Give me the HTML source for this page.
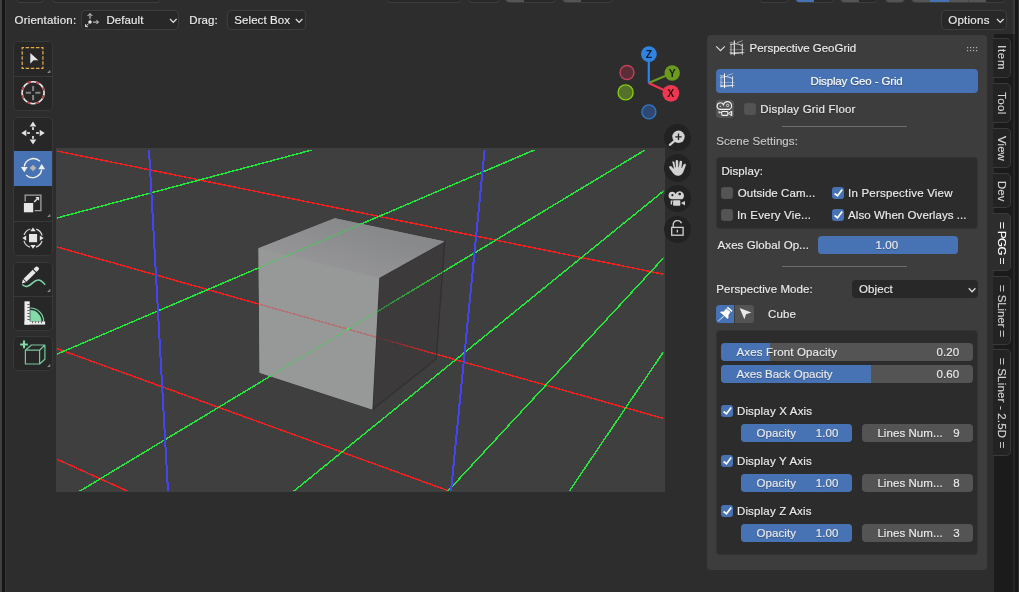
<!DOCTYPE html>
<html>
<head>
<meta charset="utf-8">
<title>Blender - Perspective GeoGrid</title>
<style>
*{box-sizing:border-box;margin:0;padding:0}
html,body{width:1019px;height:592px;overflow:hidden;background:#2d2d2d}
body{position:relative;font-family:"Liberation Sans",sans-serif;font-size:11.5px;line-height:13px;color:#ececec;letter-spacing:.07px;-webkit-text-stroke:.16px #ececec}
#root{position:absolute;left:0;top:0;width:1019px;height:592px;will-change:transform}
.a{position:absolute}
.t{position:absolute;white-space:pre;height:13px;text-shadow:0 1px 1px rgba(0,0,0,.3)}
svg{position:absolute;overflow:visible}
/* window edges */
#el0{left:0;top:0;width:2px;height:592px;background:#3f3f3f}
#el1{left:2px;top:0;width:3px;height:592px;background:#151515}
#el2{left:5px;top:0;width:1px;height:592px;background:#393939}
#er0{left:1013px;top:0;width:2px;height:34px;background:#2d2d2d}
#er1{left:1015.400px;top:0;width:2.300px;height:592px;background:#171717}
#er3{left:1013px;top:0;width:1.500px;height:34.300px;background:#393939}
#er4{left:1013px;top:34.300px;width:2.400px;height:558px;background:#262626}
#er2{left:1017.700px;top:0;width:1.300px;height:592px;background:#303030}
/* top strip buttons (cut off) */
.tb{position:absolute;top:-18px;height:21px;border:1px solid #3d3d3d;border-radius:4px;background:#282828;overflow:hidden}
.tb i{position:absolute;top:0;bottom:0;display:block}
.g{background:#545454}.b{background:#4772b3}
/* header dropdowns */
.dd{position:absolute;top:10px;height:20px;border:1px solid #3d3d3d;border-radius:4px;background:#282828}
/* toolbar */
.tg{position:absolute;left:13px;width:40px;border:1px solid #383838;border-radius:5px;background:#272727;overflow:hidden}
.tg .sep{position:absolute;left:0;width:38px;height:1px;background:#383838}
.tg .act{position:absolute;left:0;width:38px;background:#4772b3}
/* viewport */
#vp{left:56px;top:148px;width:609px;height:344px;background:#3f3f3f}
/* nav */
.nav{position:absolute;left:663.5px;width:27.5px;height:27.5px;border-radius:50%;background:#222}
/* sidebar */
#panel{left:707px;top:35px;width:280px;height:534.5px;background:#3d3d3d;border-radius:4px}
.box{position:absolute;left:716px;width:262px;background:#2c2c2c;border-radius:4px;border:1px solid #333}
.cb{position:absolute;width:12.3px;height:12.3px;border-radius:2.5px;background:#545454;border:1px solid #525252}
.cb.on{background:#4772b3;border-color:#4772b3}
.sl{position:absolute;height:18px;border-radius:4px;background:#545454;overflow:hidden}
.sl i{position:absolute;left:0;top:0;bottom:0;background:#4772b3;display:block}
.hr{position:absolute;left:782px;width:125px;height:1px;background:#6e6e6e}
/* tabs */
#tabcol{left:994px;top:34.300px;width:19px;height:558px;background:#1b1b1b}
.tab{position:absolute;left:993px;width:18px;border:1px solid #3a3a3a;border-left:none;border-radius:0 5px 5px 0;background:#232323}
.tab.on{background:#2d2d2d;left:992px;width:19px}
.tt{position:absolute;left:1002px;white-space:pre;transform-origin:0 0;transform:rotate(90deg);height:13px;color:#d4d4d4;-webkit-text-stroke:.15px #d4d4d4}
</style>
</head>
<body>
<div id="root">
<!-- window edges -->
<div class="a" id="el0"></div><div class="a" id="el1"></div><div class="a" id="el2"></div>
<div class="a" id="er1"></div><div class="a" id="er2"></div><div class="a" id="er3"></div><div class="a" id="er4"></div>

<!-- top strip -->
<div class="tb" style="left:16px;width:28px"></div>
<div class="tb" style="left:52px;width:109px"></div>
<div class="tb" style="left:386px;width:76px"></div>
<div class="tb" style="left:468px;width:32px"></div>
<div class="tb" style="left:505px;width:51px"><i class="g" style="left:0;width:18px"></i></div>
<div class="tb" style="left:562px;width:51px"><i class="g" style="left:0;width:18px"></i></div>
<div class="tb" style="left:759px;width:30px"></div>
<div class="tb" style="left:795px;width:39px"><i class="b" style="left:0;width:18px"></i></div>
<div class="tb" style="left:840px;width:38px"><i class="g" style="left:0;width:18px"></i></div>
<div class="tb" style="left:885px;width:20px"><i class="g" style="left:0;width:20px"></i></div>
<div class="tb" style="left:911px;width:95px"><i class="g" style="left:0;width:18px"></i><i class="b" style="left:18px;width:19px"></i><i class="g" style="left:37px;width:37px"></i><i style="left:55.5px;width:1px;background:#484848"></i></div>

<!-- header row -->
<div class="t" style="left:14.5px;top:13.5px;letter-spacing:.2px">Orientation:</div>
<div class="dd" style="left:81px;width:98px"></div>
<div class="t" style="left:106.5px;top:13.5px">Default</div>
<div class="t" style="left:189.3px;top:13.5px">Drag:</div>
<div class="dd" style="left:226.5px;width:79px"></div>
<div class="t" style="left:234.3px;top:13.5px">Select Box</div>
<div class="dd" style="left:940.5px;width:66px"></div>
<div class="t" style="left:948.2px;top:13.5px;letter-spacing:.27px">Options</div>

<!-- toolbar -->
<div class="tg" style="top:41px;height:69.5px"><div class="sep" style="top:33.5px"></div></div>
<div class="tg" style="top:116.5px;height:139px"><div class="act" style="top:33.5px;height:34.5px"></div><div class="sep" style="top:103px"></div></div>
<div class="tg" style="top:261.5px;height:69px"><div class="sep" style="top:33.5px"></div></div>
<div class="tg" style="top:336px;height:35px"></div>

<svg id="toolsvg" width="1019" height="592" viewBox="0 0 1019 592" style="left:0;top:0">
<!-- 1 select box -->
<rect x="22.200" y="47.700" width="20.700" height="20.600" fill="none" stroke="#e8ab44" stroke-width="1.250" stroke-dasharray="3.500 1.660" stroke-dashoffset="1.750"/>
<path d="M30.300 53v10.800l3.200-3.500h4.800z" fill="#e6e6e6"/>
<path d="M50.300 69.800v3.200h-3.200z" fill="#8a8a8a"/>
<!-- 2 cursor -->
<circle cx="33.100" cy="92.700" r="11" fill="none" stroke="#ececec" stroke-width="1.600"/>
<circle cx="33.100" cy="92.700" r="11" fill="none" stroke="#c23a44" stroke-width="1.600" stroke-dasharray="3.700 4.939" stroke-dashoffset="-2.500"/>
<path d="M25.800 92.700h5.200M35.300 92.700h5.200M33.100 85.900v5.100M33.100 95v5.300" stroke="#848484" stroke-width="2" fill="none"/>
<!-- 3 move -->
<g fill="#e2e2e2">
<path d="M33 121.400l3.300 5h-6.600z"/><rect x="32.100" y="127.200" width="1.800" height="2.800"/>
<path d="M33 144.600l3.300-5h-6.600z"/><rect x="32.100" y="136" width="1.800" height="2.800"/>
<path d="M21.300 133l5-3.300v6.600z"/><rect x="27.100" y="132.100" width="2.800" height="1.800"/>
<path d="M44.700 133l-5-3.300v6.600z"/><rect x="36.100" y="132.100" width="2.800" height="1.800"/>
</g>
<!-- 4 rotate (active) -->
<g fill="none" stroke="#f0f0f0" stroke-width="1.400">
<path d="M24.300 166.500a9.200 9.200 0 0 1 15.600-5.200"/>
<path d="M41.700 169.700a9.200 9.200 0 0 1-15.600 5.200"/>
</g>
<path d="M20.900 167h6.800l-3.400 5.200z" fill="#f0f0f0"/>
<path d="M45.100 169.200h-6.800l3.400-5.200z" fill="#f0f0f0"/>
<path d="M33 164.700l3.300 3.300-3.300 3.300-3.300-3.300z" fill="#b4b4b4"/>
<!-- 5 scale -->
<path d="M25.200 201.500v-6.300h15.700v15.500h-6.300" fill="none" stroke="#a2a2a2" stroke-width="1.300"/>
<rect x="23.900" y="203" width="9.300" height="9.300" fill="#e6e6e6"/>
<path d="M34.200 201.900l3.400-3.400" stroke="#e6e6e6" stroke-width="1.400" fill="none"/>
<path d="M39.100 197v3.800l-3.800-3.800z" fill="#e6e6e6"/>
<path d="M50.300 213.800v3.200h-3.200z" fill="#8a8a8a"/>
<!-- 6 transform -->
<rect x="29" y="234" width="8.100" height="8.200" fill="#e6e6e6"/>
<circle cx="33" cy="238.100" r="9.500" fill="none" stroke="#dcdcdc" stroke-width="1.200" stroke-dasharray="8.900 6.023" stroke-dashoffset="-3"/>
<g fill="#e6e6e6"><path d="M33 227.500l2.700 3.800h-5.400z"/><path d="M33 248.700l2.700-3.800h-5.400z"/><path d="M22.400 238.100l3.800-2.700v5.400z"/><path d="M43.600 238.100l-3.800-2.700v5.400z"/></g>
<!-- 7 annotate -->
<path d="M22.300 284.600c3.400 3.500 7 1.600 10.300-1.700 3.400-3.300 7.300-5.200 12.500 1.900" fill="none" stroke="#7fd6a6" stroke-width="1.500"/>
<path d="M21.80 283.40L25.91 282.32L22.98 279.31zM26.49 281.76L35.65 272.82L32.72 269.82L23.55 278.75zM36.44 272.05L38.73 269.82Q39.73 268.84 38.26 267.34Q36.80 265.84 35.79 266.81L33.50 269.05z" fill="#e8e8e8"/>
<path d="M50.300 288.800v3.200h-3.200z" fill="#8a8a8a"/>
<!-- 8 measure -->
<path d="M30.300 321.300v-11.200a11.200 11.200 0 0 1 11.200 11.200z" fill="#83dba9"/>
<path d="M30.300 308a13.300 13.300 0 0 1 13.300 13.300" fill="none" stroke="#83dba9" stroke-width="1.100"/>
<rect x="24.500" y="301.300" width="5.200" height="23.300" fill="#ededed"/>
<rect x="24.500" y="321.400" width="20.600" height="3.200" fill="#ededed"/>
<path d="M27.300 304.500h2.400M27.300 307.500h2.400M27.300 310.500h2.400M27.300 313.500h2.400M27.300 316.500h2.400M27.300 319.500h2.400M32.500 321.400v1.800M35.500 321.400v1.800M38.500 321.400v1.800M41.500 321.400v1.800" stroke="#555" stroke-width=".9" fill="none"/>
<!-- 9 add cube -->
<path d="M20.200 344.400h7.600M24 340.600v7.600" stroke="#83dba9" stroke-width="2" fill="none"/>
<path d="M25.400 350.200h14.200v13.800h-14.200zM25.400 350.200l6-5.200h13.500l-5.300 5.200M44.900 345v14.200l-5.300 4.800" fill="none" stroke="#79c89c" stroke-width="1.200" stroke-linejoin="round"/>
<path d="M50.300 363.800v3.200h-3.200z" fill="#8a8a8a"/>
</svg>

<!-- viewport -->
<div class="a" id="vp"></div>
<svg id="vpsvg" width="1019" height="592" viewBox="0 0 1019 592" style="left:0;top:0">
<defs>
<clipPath id="cv"><rect x="57" y="150" width="606.4" height="341"/></clipPath>
<clipPath id="cL"><polygon points="258.5,248.2 379.3,278 372.4,409.6 259.6,372.7"/></clipPath>
<clipPath id="cT"><polygon points="258.5,248.2 334.9,218.2 444.7,241.6 379.3,278"/></clipPath>
<clipPath id="cR"><polygon points="379.3,278 444.7,241.6 436.2,358.9 372.4,409.6"/></clipPath>
<linearGradient id="gG" gradientUnits="userSpaceOnUse" x1="376" y1="0" x2="441" y2="0"><stop offset="0" stop-color="#22e63a" stop-opacity=".4"/><stop offset="1" stop-color="#22e63a" stop-opacity=".78"/></linearGradient>
<linearGradient id="gT" gradientUnits="userSpaceOnUse" x1="350" y1="222" x2="335" y2="268"><stop offset="0" stop-color="#88898b"/><stop offset="1" stop-color="#949496"/></linearGradient>
<linearGradient id="gR" gradientUnits="userSpaceOnUse" x1="380" y1="0" x2="437" y2="0"><stop offset="0" stop-color="#ee2020" stop-opacity=".12"/><stop offset="1" stop-color="#ee2020" stop-opacity=".9"/></linearGradient>
<g id="lnR"><line x1="57" y1="151" x2="664" y2="274.3"/><line x1="57" y1="247" x2="664" y2="418.6"/><line x1="57" y1="348.6" x2="449" y2="491"/><line x1="57" y1="459.2" x2="128" y2="491.3"/></g>
<g id="lnG"><line x1="57" y1="218" x2="312" y2="150"/><line x1="57" y1="354.1" x2="535.4" y2="149.5"/><line x1="79" y1="491.6" x2="645" y2="150"/><line x1="293.2" y1="491.6" x2="664" y2="190.6"/><line x1="447.4" y1="491.6" x2="664" y2="257.4"/><line x1="569" y1="491.6" x2="663.4" y2="352"/></g>
<g id="lnB"><line x1="149" y1="150" x2="168" y2="491"/><line x1="484.6" y1="150" x2="451" y2="491"/></g>
</defs>
<g clip-path="url(#cv)" shape-rendering="crispEdges" stroke-width="1.5" fill="none">
<use href="#lnR" stroke="#ee2020"/>
<use href="#lnG" stroke="#22e63a"/>
<use href="#lnB" stroke="#4444f0" stroke-width="2"/>
</g>
<!-- cube -->
<polygon points="258.5,248.2 334.9,218.2 444.7,241.6 379.3,278 372.4,409.6 259.6,372.7" fill="#959697"/>
<polygon points="379.3,278 444.7,241.6 436.2,358.9 372.4,409.6" fill="#3d3a3c" stroke="#312f31" stroke-width="1.200"/>
<polygon points="258.5,248.2 334.9,218.2 444.7,241.6 379.3,278" fill="url(#gT)"/>
<polygon points="258.5,248.2 379.3,278 372.4,409.6 259.6,372.7" fill="#979898"/>
<g shape-rendering="crispEdges" stroke-width="1.5" fill="none">
<g clip-path="url(#cL)" opacity=".3"><use href="#lnR" stroke="#ee2020"/><use href="#lnG" stroke="#22e63a"/></g>
<g clip-path="url(#cT)" opacity=".36"><use href="#lnG" stroke="#22e63a"/></g>
<rect x="347.300" y="328.300" width="2" height="1.800" fill="#44ea50"/>
<g clip-path="url(#cR)"><use href="#lnR" stroke="url(#gR)"/><use href="#lnG" stroke="url(#gG)"/></g>
</g>
</svg>

<!-- gizmo -->
<svg id="gizmo" width="1019" height="592" viewBox="0 0 1019 592" style="left:0;top:0">
<circle cx="627" cy="72.5" r="7" fill="#5a2d37" stroke="#c2425b" stroke-width="1.4"/>
<circle cx="625.6" cy="92.4" r="7.5" fill="#566f2b" stroke="#86cc10" stroke-width="1.4"/>
<circle cx="648.9" cy="111.9" r="7" fill="#2e4870" stroke="#2f78cf" stroke-width="1.4"/>
<line x1="648.6" y1="83.1" x2="672.2" y2="73" stroke="#6b9a1f" stroke-width="2.2"/>
<circle cx="672.2" cy="73" r="7.7" fill="#6b9a1f"/>
<line x1="648.8" y1="83.1" x2="648.8" y2="54.1" stroke="#2f84e3" stroke-width="2.2"/>
<line x1="648.6" y1="83.1" x2="670.9" y2="93.3" stroke="#f03752" stroke-width="2.2"/>
<circle cx="670.9" cy="93.3" r="8.4" fill="#f03752"/>
<circle cx="648.9" cy="54.1" r="7.9" fill="#2f84e3"/>
<g font-family="Liberation Sans, sans-serif" font-weight="bold" font-size="10.5" text-anchor="middle" fill="#000" fill-opacity=".78">
<text x="648.9" y="57.9">Z</text><text x="672.2" y="76.8">Y</text><text x="670.9" y="97.1">X</text>
</g>
</svg>

<!-- nav buttons -->
<div class="nav" style="top:123.5px"></div>
<div class="nav" style="top:154.3px"></div>
<div class="nav" style="top:184.8px"></div>
<div class="nav" style="top:215.5px"></div>
<svg id="navsvg" width="1019" height="592" viewBox="0 0 1019 592" style="left:0;top:0">
<!-- zoom -->
<line x1="674" y1="141.4" x2="669.8" y2="144.8" stroke="#d2d2d2" stroke-width="2.2" stroke-linecap="round"/>
<circle cx="678.5" cy="136.8" r="6.2" fill="#d2d2d2"/>
<path d="M675.3 136.8h6.4M678.5 133.6v6.4" stroke="#222" stroke-width="1.3" fill="none"/>
<!-- hand -->
<path d="M672.6 161.2c.9-.3 1.6.2 1.7 1l.9 5.2.5-.1-.2-6.300c0-.9.6-1.500 1.400-1.500s1.400.6 1.400 1.500l.2 6.100.5.000.7-5.600c.1-.9.800-1.400 1.600-1.300.8.100 1.300.800 1.200 1.700l-.7 6.000.5.200 1.700-3.900c.4-.8 1.100-1.100 1.800-.8.700.300.900 1.100.6 1.900l-2.200 5.800c-.9 2.700-2.700 5.100-6.300 5.100-2.700 0-4.300-1.300-5.700-3.400l-3.300-4.600c-.5-.8-.4-1.600.2-2.100.6-.5 1.500-.4 2.100.3l2.200 2.300.3-.2-1.600-6.500c-.2-.9.200-1.600 1-1.900z" fill="#d2d2d2" transform="translate(677.1 168.2) scale(.93) translate(-677.1 -168.2)"/>
<!-- camera -->
<path d="M672.3 191.700a3.500 3.500 0 0 1 3.300 2.200 4.400 4.400 0 1 1 6.700 5.300h-10a3.500 3.500 0 0 1 0-7.500z" fill="#d2d2d2"/>
<circle cx="672.400" cy="195.200" r="1.100" fill="#222"/><circle cx="679.700" cy="194.000" r="1.300" fill="#222"/>
<rect x="673.1" y="200.300" width="7.200" height="5.400" rx=".8" fill="#d2d2d2"/>
<path d="M680.900 203.000 685 200.900v4.700z" fill="#d2d2d2"/>
<path d="M670.700 200.600h2v1.200h-.6v2.800h-1.400z" fill="#d2d2d2"/>
<!-- lock -->
<rect x="671.700" y="227.400" width="11.400" height="7.800" fill="none" stroke="#d2d2d2" stroke-width="1.300"/>
<path d="M673.200 227.400v-2.600a4.300 4.300 0 0 1 8.300-1.500" fill="none" stroke="#d2d2d2" stroke-width="1.300"/>
<rect x="676.700" y="229.800" width="1.300" height="2.700" fill="#d2d2d2"/>
</svg>

<!-- sidebar -->
<div class="a" id="tabcol"></div>
<div class="a" id="panel"></div>
<!-- panel header -->
<svg width="1019" height="592" viewBox="0 0 1019 592" style="left:0;top:0">
<defs>
<g id="geo" fill="none" stroke="#fff">
<path d="M4.9 .3v14.9" stroke-width="1" stroke-opacity=".95"/>
<path d="M12.9 3.3v11.200" stroke-width=".9" stroke-opacity=".85"/>
<path d="M1.100 3.800v10.600M2.200 3.800v10.600" stroke-width=".7" stroke-opacity=".5"/>
<path d="M0 2.600h4.300" stroke-width=".8" stroke-opacity=".55"/>
<path d="M7.600 2.600l5.600-2.100" stroke-width=".8" stroke-opacity=".6"/>
<path d="M.9 4.200l4-.3M5.400 3.400c2.600.3 5.200 1 7.500 2.100" stroke-width=".9" stroke-opacity=".8"/>
<path d="M.1 9.500h14.900" stroke-width=".8" stroke-opacity=".4"/>
<path d="M.1 12.400h14.900" stroke-width=".8" stroke-opacity=".6"/>
<path d="M.9 13.400c4 .2 8-.2 12-1" stroke-width=".9" stroke-opacity=".8"/>
</g>
</defs>
<path d="M716.200 46.300l4.300 4.400 4.300-4.400" fill="none" stroke="#dcdcdc" stroke-width="1.200"/>
<use href="#geo" x="729.400" y="40.200"/>
<g fill="#b4b4b4"><rect x="967" y="47" width="1.2" height="1.2"/><rect x="970" y="47" width="1.2" height="1.2"/><rect x="973" y="47" width="1.2" height="1.2"/><rect x="976" y="47" width="1.2" height="1.2"/><rect x="967" y="50" width="1.2" height="1.2"/><rect x="970" y="50" width="1.2" height="1.2"/><rect x="973" y="50" width="1.2" height="1.2"/><rect x="976" y="50" width="1.2" height="1.2"/></g>
</svg>
<div class="t" style="left:749.5px;top:41.700px;letter-spacing:0">Perspective GeoGrid</div>

<!-- display geo-grid button -->
<div class="a" style="left:716px;top:69px;width:262px;height:24px;border-radius:4px;background:#4772b3"></div>
<svg width="1019" height="592" viewBox="0 0 1019 592" style="left:0;top:0"><use href="#geo" x="719.600" y="73"/></svg>
<div class="t" style="left:810.5px;top:74.600px;color:#fff;-webkit-text-stroke-color:#fff;letter-spacing:-.14px">Display Geo - Grid</div>

<!-- camera + grid floor -->
<div class="a" style="left:716px;top:100px;width:18px;height:18px;border-radius:3.500px;background:#545454"></div>
<svg width="1019" height="592" viewBox="0 0 1019 592" style="left:0;top:0">
<g fill="none" stroke="#f0f0f0" stroke-width="1.100">
<path d="M720.300 109.400a3.300 3.300 0 1 1 3.100-4.600 4.200 4.200 0 1 1 6.300 4.600z"/>
<rect x="721.700" y="111.500" width="6.100" height="3.900" rx=".8"/>
<path d="M728.400 113.400l3-2v4z" stroke-width="1"/><path d="M731.700 110.900v5"/>
<path d="M719.100 111.200v2.200M719.100 112.300h2.600" stroke-width="1"/>
</g>
<circle cx="727.600" cy="105.400" r="1.200" fill="none" stroke="#f0f0f0" stroke-width=".8"/><circle cx="720.300" cy="106.300" r=".65" fill="#f0f0f0"/>
</svg>
<div class="cb" style="left:744px;top:103px"></div>
<div class="t" style="left:760.300px;top:102.600px;letter-spacing:.18px">Display Grid Floor</div>
<div class="hr" style="top:126px"></div>

<div class="t" style="left:716.300px;top:134.600px;color:#c8c8c8;-webkit-text-stroke-color:#c8c8c8">Scene Settings:</div>
<div class="box" style="top:157px;height:72px"></div>
<div class="t" style="left:721.500px;top:164.500px">Display:</div>
<div class="cb" style="left:721px;top:186.700px"></div>
<div class="t" style="left:737.700px;top:186.500px">Outside Cam...</div>
<div class="cb on" style="left:832px;top:186.700px"></div>
<div class="t" style="left:848.100px;top:186.500px;letter-spacing:.2px">In Perspective View</div>
<div class="cb" style="left:721px;top:208.700px"></div>
<div class="t" style="left:736.900px;top:208.600px;letter-spacing:.2px">In Every Vie...</div>
<div class="cb on" style="left:832px;top:208.700px"></div>
<div class="t" style="left:848.100px;top:208.600px">Also When Overlays ...</div>

<div class="t" style="left:717.600px;top:238.500px">Axes Global Op...</div>
<div class="sl" style="left:818px;top:236px;width:140px"><i style="width:100%"></i></div>
<div class="t" style="left:875.500px;top:238.500px">1.00</div>
<div class="hr" style="top:266px"></div>

<div class="t" style="left:716.300px;top:282.500px">Perspective Mode:</div>
<div class="a" style="left:852px;top:280px;width:126px;height:18px;border-radius:4px;background:#282828"></div>
<div class="t" style="left:859.100px;top:282.600px">Object</div>

<div class="a" style="left:716px;top:305px;width:18px;height:18px;border-radius:3.500px 0 0 3.500px;background:#4772b3"></div>
<div class="a" style="left:734.700px;top:305px;width:19.300px;height:18px;border-radius:0 3.500px 3.500px 0;background:#545454"></div>
<div class="t" style="left:768.100px;top:307.600px">Cube</div>

<div class="box" style="top:330px;height:225px"></div>
<div class="sl" style="left:721px;top:343px;width:252.300px"><i style="width:48.500px"></i></div>
<div class="t" style="left:736.400px;top:345.600px;letter-spacing:.16px">Axes Front Opacity</div>
<div class="t" style="left:936.500px;top:345.600px">0.20</div>
<div class="sl" style="left:721px;top:365px;width:252.300px"><i style="width:150.300px"></i></div>
<div class="t" style="left:736.400px;top:367.600px;letter-spacing:-.02px">Axes Back Opacity</div>
<div class="t" style="left:936.500px;top:367.600px">0.60</div>

<div class="cb on" style="left:721px;top:404.700px"></div>
<div class="t" style="left:736.900px;top:404.600px;letter-spacing:.18px">Display X Axis</div>
<div class="sl" style="left:741px;top:424px;width:111px"><i style="width:100%"></i></div>
<div class="t" style="left:756.500px;top:426.600px">Opacity</div><div class="t" style="left:815.700px;top:426.600px">1.00</div>
<div class="sl" style="left:861.700px;top:424px;width:111.600px"></div>
<div class="t" style="left:877.400px;top:426.600px">Lines Num...</div><div class="t" style="left:953.200px;top:426.600px">9</div>

<div class="cb on" style="left:721px;top:454.700px"></div>
<div class="t" style="left:736.900px;top:454.600px;letter-spacing:.18px">Display Y Axis</div>
<div class="sl" style="left:741px;top:474px;width:111px"><i style="width:100%"></i></div>
<div class="t" style="left:756.500px;top:476.600px">Opacity</div><div class="t" style="left:815.700px;top:476.600px">1.00</div>
<div class="sl" style="left:861.700px;top:474px;width:111.600px"></div>
<div class="t" style="left:877.400px;top:476.600px">Lines Num...</div><div class="t" style="left:953.200px;top:476.600px">8</div>

<div class="cb on" style="left:721px;top:504.700px"></div>
<div class="t" style="left:736.900px;top:504.600px;letter-spacing:.18px">Display Z Axis</div>
<div class="sl" style="left:741px;top:524px;width:111px"><i style="width:100%"></i></div>
<div class="t" style="left:756.500px;top:526.600px">Opacity</div><div class="t" style="left:815.700px;top:526.600px">1.00</div>
<div class="sl" style="left:861.700px;top:524px;width:111.600px"></div>
<div class="t" style="left:877.400px;top:526.600px">Lines Num...</div><div class="t" style="left:953.200px;top:526.600px">3</div>

<!-- check marks, chevrons, pin / arrow icons -->
<svg width="1019" height="592" viewBox="0 0 1019 592" style="left:0;top:0">
<defs><path id="ck" d="M2.600 6.500l2.900 2.300 4.700-6.400" fill="none" stroke="#fff" stroke-width="1.700"/>
<path id="chv" d="M0 0l3.300 3.400 3.300-3.400" fill="none" stroke="#dcdcdc" stroke-width="1.300"/></defs>
<use href="#ck" x="832" y="187"/><use href="#ck" x="832" y="209"/>
<use href="#ck" x="721" y="405"/><use href="#ck" x="721" y="455"/><use href="#ck" x="721" y="505"/>
<use href="#chv" x="170" y="19"/><use href="#chv" x="295.800" y="19"/><use href="#chv" x="997" y="19"/><use href="#chv" x="968.800" y="288.300"/>
<!-- orientation icon -->
<g fill="none" stroke="#d8d8d8" stroke-width="1">
<path d="M90 18.800v-5.100M87.600 16l2.400-2.400 2.400 2.400"/><path d="M93 22.100h5.400M96.400 20.100l2 2-2 2"/><path d="M88.600 23.600l-3.100 3.100M85.500 24.200v2.500h2.500"/>
</g>
<circle cx="90" cy="22.100" r="1.750" fill="#e6e6e6"/>
<!-- pin -->
<g fill="#fff"><path d="M727.900 306.700l4.700 4.100-1.100 1.200-4.700-4.100z"/><path d="M726.400 308.600l4 3.500-2.100 3.300c.5 1.300.3 2.500-.6 3.500l-7.800-6.800c1.100-.8 2.300-.9 3.500-.3z"/><path d="M723.300 315.900l-5.600 5.300.3.300 6-4.900z"/></g>
<!-- arrow -->
<path d="M739.600 308l11.800 4.500-5.400 1.800-1.600 5z" fill="#e8e8e8"/>
</svg>

<!-- tabs -->
<div class="tab" style="top:38px;height:40px"></div>
<div class="tab" style="top:83px;height:39.500px"></div>
<div class="tab" style="top:127.500px;height:40.500px"></div>
<div class="tab" style="top:173px;height:35px"></div>
<div class="tab on" style="top:212.500px;height:58.500px"></div>
<div class="tab" style="top:276px;height:68.500px"></div>
<div class="tab" style="top:349px;height:106.500px"></div>
<div class="tt" style="left:1007.800px;top:45.300px;letter-spacing:.7px">Item</div>
<div class="tt" style="left:1007.800px;top:92px;letter-spacing:.4px">Tool</div>
<div class="tt" style="left:1007.800px;top:135.500px">View</div>
<div class="tt" style="left:1007.800px;top:180.500px">Dev</div>
<div class="tt" style="left:1007.800px;top:222px;color:#fff;-webkit-text-stroke-color:#fff;letter-spacing:-.5px">= PGG =</div>
<div class="tt" style="left:1007.800px;top:285px;letter-spacing:-.12px">= SLiner =</div>
<div class="tt" style="left:1007.800px;top:358px;letter-spacing:.17px">= SLiner - 2.5D =</div>

</div>
</body>
</html>
